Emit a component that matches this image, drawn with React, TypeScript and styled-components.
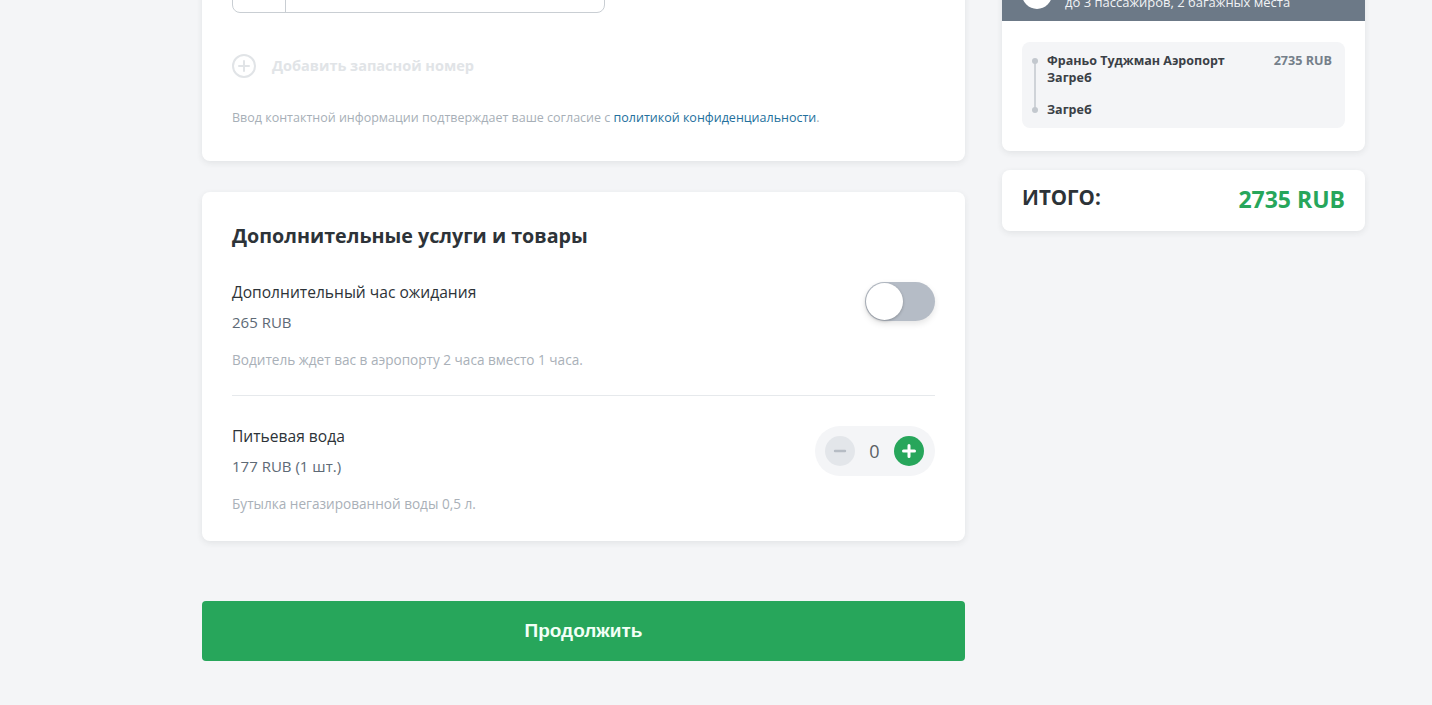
import React from "react";
import styled, { createGlobalStyle } from "styled-components";

const Global = createGlobalStyle`
  html, body { margin: 0; padding: 0; background: #f4f5f7; }
  body { font-family: "Open Sans", "Noto Sans", sans-serif; color: #2d3338; overflow: hidden; }
  * { box-sizing: border-box; }
`;

const Page = styled.div`
  display: grid;
  grid-template-columns: 763px 363px;
  column-gap: 37px;
  align-items: start;
  margin: -60px 0 0 202px;
  width: 1163px;
`;

const Column = styled.div<{ $gap: number }>`
  display: flex;
  flex-direction: column;
  gap: ${(p) => p.$gap}px;
`;

const Card = styled.section`
  background: #fff;
  border-radius: 8px;
  box-shadow: 0 2px 6px rgba(40, 50, 60, 0.09);
  overflow: hidden;
`;

const ContactCard = styled(Card)`
  padding: 30px 30px 33px;
`;

const PhoneInput = styled.div`
  display: flex;
  width: 373px;
  height: 43px;
  border: 1px solid #c9ced3;
  border-radius: 8px;
`;

const PhoneCode = styled.div`
  width: 53px;
  border-right: 1px solid #c9ced3;
`;

const AddRow = styled.div`
  display: flex;
  align-items: center;
  gap: 16px;
  margin-top: 41px;
  font-size: 14.5px;
  font-weight: 700;
  color: #e1e4e7;
  line-height: 24px;
`;

const Consent = styled.p`
  margin: 30px 0 0;
  font-size: 12.5px;
  line-height: 20px;
  color: #a7afb7;
`;

const Link = styled.a`
  color: #23709d;
  text-decoration: none;
`;

const ServicesCard = styled(Card)`
  padding: 30px 30px 27px;
`;

const Heading = styled.h2`
  margin: 0;
  font-size: 19.7px;
  line-height: 28px;
  font-weight: 700;
  color: #2d3338;
`;

const Item = styled.div<{ $last?: boolean }>`
  display: flex;
  justify-content: space-between;
  align-items: flex-start;
  padding: ${(p) => (p.$last ? "29px 0 0" : "31px 0 25px")};
  border-bottom: ${(p) => (p.$last ? "none" : "1px solid #e6e9ec")};
`;

const ItemInfo = styled.div`
  display: flex;
  flex-direction: column;
`;

const ItemTitle = styled.div`
  font-size: 15.6px;
  line-height: 22px;
  color: #2d3338;
`;

const ItemPrice = styled.div`
  margin-top: 8px;
  font-size: 15px;
  line-height: 22px;
  color: #5e6a76;
`;

const ItemDesc = styled.div`
  margin-top: 17px;
  font-size: 13.6px;
  line-height: 20px;
  color: #a9b0b8;
`;

const Toggle = styled.div`
  display: flex;
  align-items: center;
  width: 70px;
  height: 39px;
  margin-top: 1px;
  padding: 1px;
  border-radius: 20px;
  background: #b5bcc6;
  box-shadow: 0 3px 6px rgba(0, 0, 0, 0.1);
`;

const Knob = styled.div`
  width: 37px;
  height: 37px;
  border-radius: 50%;
  background: #fff;
  box-shadow: 0 1px 3px rgba(0, 0, 0, 0.25);
`;

const Counter = styled.div`
  display: flex;
  align-items: center;
  width: 120px;
  height: 50px;
  padding: 0 11px 0 10px;
  border-radius: 25px;
  background: #f4f5f7;
  margin-top: 1px;
`;

const RoundBtn = styled.div<{ $active?: boolean }>`
  display: flex;
  align-items: center;
  justify-content: center;
  width: 30px;
  height: 30px;
  border-radius: 50%;
  background: ${(p) => (p.$active ? "#27a65b" : "#e3e6ea")};
`;

const Count = styled.div`
  width: 39px;
  text-align: center;
  font-size: 18px;
  color: #5a5f64;
`;

const ContinueButton = styled.button`
  margin-top: 29px;
  height: 60px;
  border: none;
  border-radius: 4px;
  background: #27a65b;
  color: #f2fff6;
  font-family: "Liberation Sans", Arial, sans-serif;
  font-size: 19px;
  font-weight: 700;
  cursor: pointer;
`;

const CarHeader = styled.div`
  display: flex;
  align-items: flex-end;
  gap: 13px;
  height: 81px;
  padding: 0 20px 10px;
  background: #6c7987;
`;

const CarIcon = styled.div`
  width: 30px;
  height: 30px;
  border-radius: 50%;
  background: #fff;
  margin-bottom: 2px;
`;

const CarText = styled.div`
  display: flex;
  flex-direction: column;
  color: #f1f3f5;
`;

const CarName = styled.div`
  font-size: 15px;
  font-weight: 700;
  line-height: 20px;
`;

const CarCapacity = styled.div`
  font-size: 13px;
  line-height: 18px;
`;

const CarBody = styled.div`
  padding: 21px 20px 23px;
`;

const RouteBox = styled.div`
  display: flex;
  gap: 14px;
  padding: 10px 13px 10px 10px;
  border-radius: 8px;
  background: #f4f5f7;
`;

const Route = styled.div`
  position: relative;
  flex: 1;
  display: flex;
  flex-direction: column;
  gap: 15px;
  &::before {
    content: "";
    position: absolute;
    left: 2px;
    top: 9px;
    bottom: 8px;
    width: 2px;
    background: #cfd3d8;
  }
`;

const Stop = styled.div`
  display: flex;
  align-items: flex-start;
  gap: 9px;
`;

const Dot = styled.span`
  flex: none;
  width: 6px;
  height: 6px;
  margin-top: 6px;
  border-radius: 50%;
  background: #c3c8ce;
  position: relative;
`;

const StopName = styled.div`
  font-size: 12.5px;
  font-weight: 700;
  line-height: 17px;
  color: #3a4046;
  max-width: 200px;
`;

const RoutePrice = styled.div`
  font-size: 12.6px;
  font-weight: 700;
  line-height: 17px;
  color: #747f8a;
`;

const TotalCard = styled(Card)`
  display: flex;
  align-items: center;
  justify-content: space-between;
  height: 61px;
  padding: 0 20px;
`;

const TotalLabel = styled.div`
  font-size: 20.5px;
  font-weight: 700;
  color: #2d3338;
  padding-bottom: 8px;
`;

const TotalValue = styled.div`
  font-size: 23px;
  font-weight: 700;
  color: #27a65b;
  padding-bottom: 3px;
`;

const PlusCircleIcon = () => (
  <svg width="24" height="24" viewBox="0 0 24 24" fill="none" stroke="#e1e4e7" strokeWidth="2" strokeLinecap="round">
    <circle cx="12" cy="12" r="11" />
    <path d="M12 7v10M7 12h10" />
  </svg>
);

const MinusIcon = () => (
  <svg width="16" height="16" viewBox="0 0 16 16" stroke="#b6bcc4" strokeWidth="2.4" strokeLinecap="round">
    <path d="M3 8h10" />
  </svg>
);

const PlusIcon = () => (
  <svg width="16" height="16" viewBox="0 0 16 16" stroke="#fff" strokeWidth="3" strokeLinecap="round">
    <path d="M8 2.5v11M2.5 8h11" />
  </svg>
);

export default function App() {
  return (
    <>
      <Global />
      <Page>
        <Column $gap={31}>
          <ContactCard>
            <PhoneInput>
              <PhoneCode />
            </PhoneInput>
            <AddRow>
              <PlusCircleIcon />
              Добавить запасной номер
            </AddRow>
            <Consent>
              Ввод контактной информации подтверждает ваше согласие с{" "}
              <Link href="#">политикой конфиденциальности</Link>.
            </Consent>
          </ContactCard>

          <ServicesCard>
            <Heading>Дополнительные услуги и товары</Heading>
            <Item>
              <ItemInfo>
                <ItemTitle>Дополнительный час ожидания</ItemTitle>
                <ItemPrice>265 RUB</ItemPrice>
                <ItemDesc>Водитель ждет вас в аэропорту 2 часа вместо 1 часа.</ItemDesc>
              </ItemInfo>
              <Toggle>
                <Knob />
              </Toggle>
            </Item>
            <Item $last>
              <ItemInfo>
                <ItemTitle>Питьевая вода</ItemTitle>
                <ItemPrice>177 RUB (1 шт.)</ItemPrice>
                <ItemDesc>Бутылка негазированной воды 0,5 л.</ItemDesc>
              </ItemInfo>
              <Counter>
                <RoundBtn>
                  <MinusIcon />
                </RoundBtn>
                <Count>0</Count>
                <RoundBtn $active>
                  <PlusIcon />
                </RoundBtn>
              </Counter>
            </Item>
          </ServicesCard>

          <ContinueButton>Продолжить</ContinueButton>
        </Column>

        <Column $gap={19}>
          <Card>
            <CarHeader>
              <CarIcon />
              <CarText>
                <CarName>Стандарт</CarName>
                <CarCapacity>до 3 пассажиров, 2 багажных места</CarCapacity>
              </CarText>
            </CarHeader>
            <CarBody>
              <RouteBox>
                <Route>
                  <Stop>
                    <Dot />
                    <StopName>Франьо Туджман Аэропорт Загреб</StopName>
                  </Stop>
                  <Stop>
                    <Dot />
                    <StopName>Загреб</StopName>
                  </Stop>
                </Route>
                <RoutePrice>2735 RUB</RoutePrice>
              </RouteBox>
            </CarBody>
          </Card>
          <TotalCard>
            <TotalLabel>ИТОГО:</TotalLabel>
            <TotalValue>2735 RUB</TotalValue>
          </TotalCard>
        </Column>
      </Page>
    </>
  );
}
